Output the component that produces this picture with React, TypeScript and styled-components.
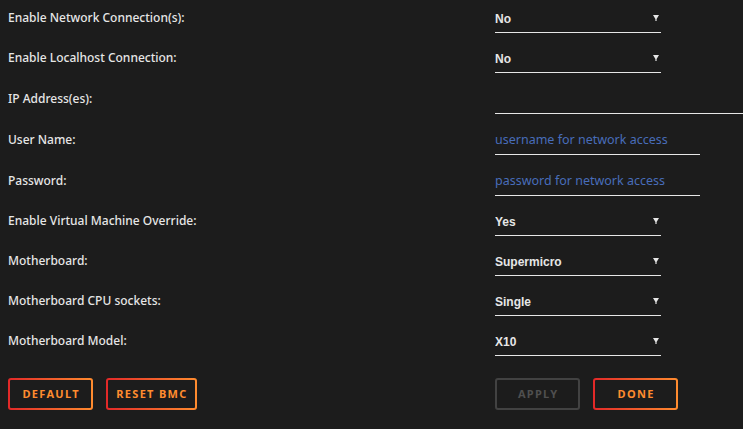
import React from 'react';
import styled, { createGlobalStyle } from 'styled-components';

const GlobalStyle = createGlobalStyle`
  html, body {
    margin: 0;
    padding: 0;
    background: #1c1c1c;
    overflow: hidden;
  }
  body {
    font-family: "Noto Sans", "Open Sans", sans-serif;
  }
`;

const Page = styled.div`
  width: 743px;
  height: 429px;
  background: #1c1c1c;
  overflow: hidden;
`;

const Form = styled.div`
  display: grid;
  grid-template-columns: 487px 1fr;
  padding-left: 8px;
`;

const Row = styled.div<{ $h: number }>`
  display: contents;
  & > * {
    height: ${({ $h }) => $h}px;
  }
`;

const Label = styled.div`
  box-sizing: border-box;
  padding-top: 9px;
  font-size: 12px;
  line-height: 18px;
  font-weight: 500;
  color: #e6e6e6;
  white-space: nowrap;
`;

const Cell = styled.div`
  box-sizing: border-box;
`;

const SelectWrap = styled.div`
  position: relative;
  width: 166px;
`;

const Select = styled.select`
  appearance: none;
  display: block;
  box-sizing: border-box;
  width: 166px;
  height: 33px;
  margin: 0;
  padding: 5px 0 0 0;
  background: transparent;
  border: none;
  border-bottom: 1px solid #e6e6e6;
  border-radius: 0;
  color: #e6e6e6;
  font-family: "Liberation Sans", Arial, sans-serif;
  font-weight: bold;
  font-size: 12px;
  line-height: 18px;
  outline: none;
`;

const Arrow = styled.svg`
  position: absolute;
  right: 2px;
  top: 15px;
  pointer-events: none;
`;

const TextInput = styled.input<{ $w: number }>`
  display: block;
  box-sizing: border-box;
  width: ${({ $w }) => $w}px;
  height: 33px;
  margin: 0;
  padding: 2px 0 0 0;
  background: transparent;
  border: none;
  border-bottom: 1px solid #e6e6e6;
  color: #e6e6e6;
  font-family: "Noto Sans", "Open Sans", sans-serif;
  font-size: 12.5px;
  line-height: 18px;
  outline: none;
  &::placeholder {
    color: #486dba;
    opacity: 1;
  }
`;

const ButtonGroup = styled.div`
  display: flex;
  gap: 13px;
  margin-top: 15px;
`;

const Button = styled.button<{ $disabled?: boolean }>`
  box-sizing: border-box;
  min-width: 85px;
  height: 32px;
  padding: 0 7px;
  border: 2px solid transparent;
  border-radius: 3px;
  background: ${({ $disabled }) =>
    $disabled
      ? '#1c1c1c'
      : 'linear-gradient(#1c1c1c, #1c1c1c) padding-box, linear-gradient(90deg, #e22828, #ff8c2f) border-box'};
  border-color: ${({ $disabled }) => ($disabled ? '#424242' : 'transparent')};
  color: ${({ $disabled }) => ($disabled ? '#4f4f4f' : '#ff8c2f')};
  font-family: "Noto Sans", "Open Sans", sans-serif;
  font-weight: 700;
  font-size: 11px;
  line-height: 26px;
  padding-bottom: 1px;
  letter-spacing: 1.3px;
  text-indent: 1.3px;
  cursor: ${({ $disabled }) => ($disabled ? 'default' : 'pointer')};
`;

const DropArrow = () => (
  <Arrow width="6" height="6" viewBox="0 0 6 6">
    <polygon points="0,0 6,0 3.6,4 3.6,6 2.4,6 2.4,4" fill="#e6e6e6" />
  </Arrow>
);

type Field =
  | { kind: 'select'; label: string; value: string; options: string[] }
  | { kind: 'input'; label: string; placeholder: string; width: number; type?: string };

const fields: Field[] = [
  { kind: 'select', label: 'Enable Network Connection(s):', value: 'No', options: ['No', 'Yes'] },
  { kind: 'select', label: 'Enable Localhost Connection:', value: 'No', options: ['No', 'Yes'] },
  { kind: 'input', label: 'IP Address(es):', placeholder: '', width: 300 },
  { kind: 'input', label: 'User Name:', placeholder: 'username for network access', width: 205 },
  { kind: 'input', label: 'Password:', placeholder: 'password for network access', width: 205, type: 'password' },
  { kind: 'select', label: 'Enable Virtual Machine Override:', value: 'Yes', options: ['No', 'Yes'] },
  { kind: 'select', label: 'Motherboard:', value: 'Supermicro', options: ['Supermicro', 'ASRock', 'Dell', 'IBM'] },
  { kind: 'select', label: 'Motherboard CPU sockets:', value: 'Single', options: ['Single', 'Dual'] },
  { kind: 'select', label: 'Motherboard Model:', value: 'X10', options: ['X9', 'X10', 'X11'] },
];

const rowHeights = [40, 41, 41, 41, 40, 40, 40, 40, 40];

export default function App() {
  return (
    <Page>
      <GlobalStyle />
      <Form>
        {fields.map((f, i) => (
          <Row key={f.label} $h={rowHeights[i]}>
            <Label>{f.label}</Label>
            <Cell>
              {f.kind === 'select' ? (
                <SelectWrap>
                  <Select defaultValue={f.value}>
                    {f.options.map((o) => (
                      <option key={o}>{o}</option>
                    ))}
                  </Select>
                  <DropArrow />
                </SelectWrap>
              ) : (
                <TextInput $w={f.width} type={f.type ?? 'text'} placeholder={f.placeholder} />
              )}
            </Cell>
          </Row>
        ))}
        <ButtonGroup>
          <Button>DEFAULT</Button>
          <Button>RESET BMC</Button>
        </ButtonGroup>
        <ButtonGroup>
          <Button $disabled disabled>
            APPLY
          </Button>
          <Button>DONE</Button>
        </ButtonGroup>
      </Form>
    </Page>
  );
}
